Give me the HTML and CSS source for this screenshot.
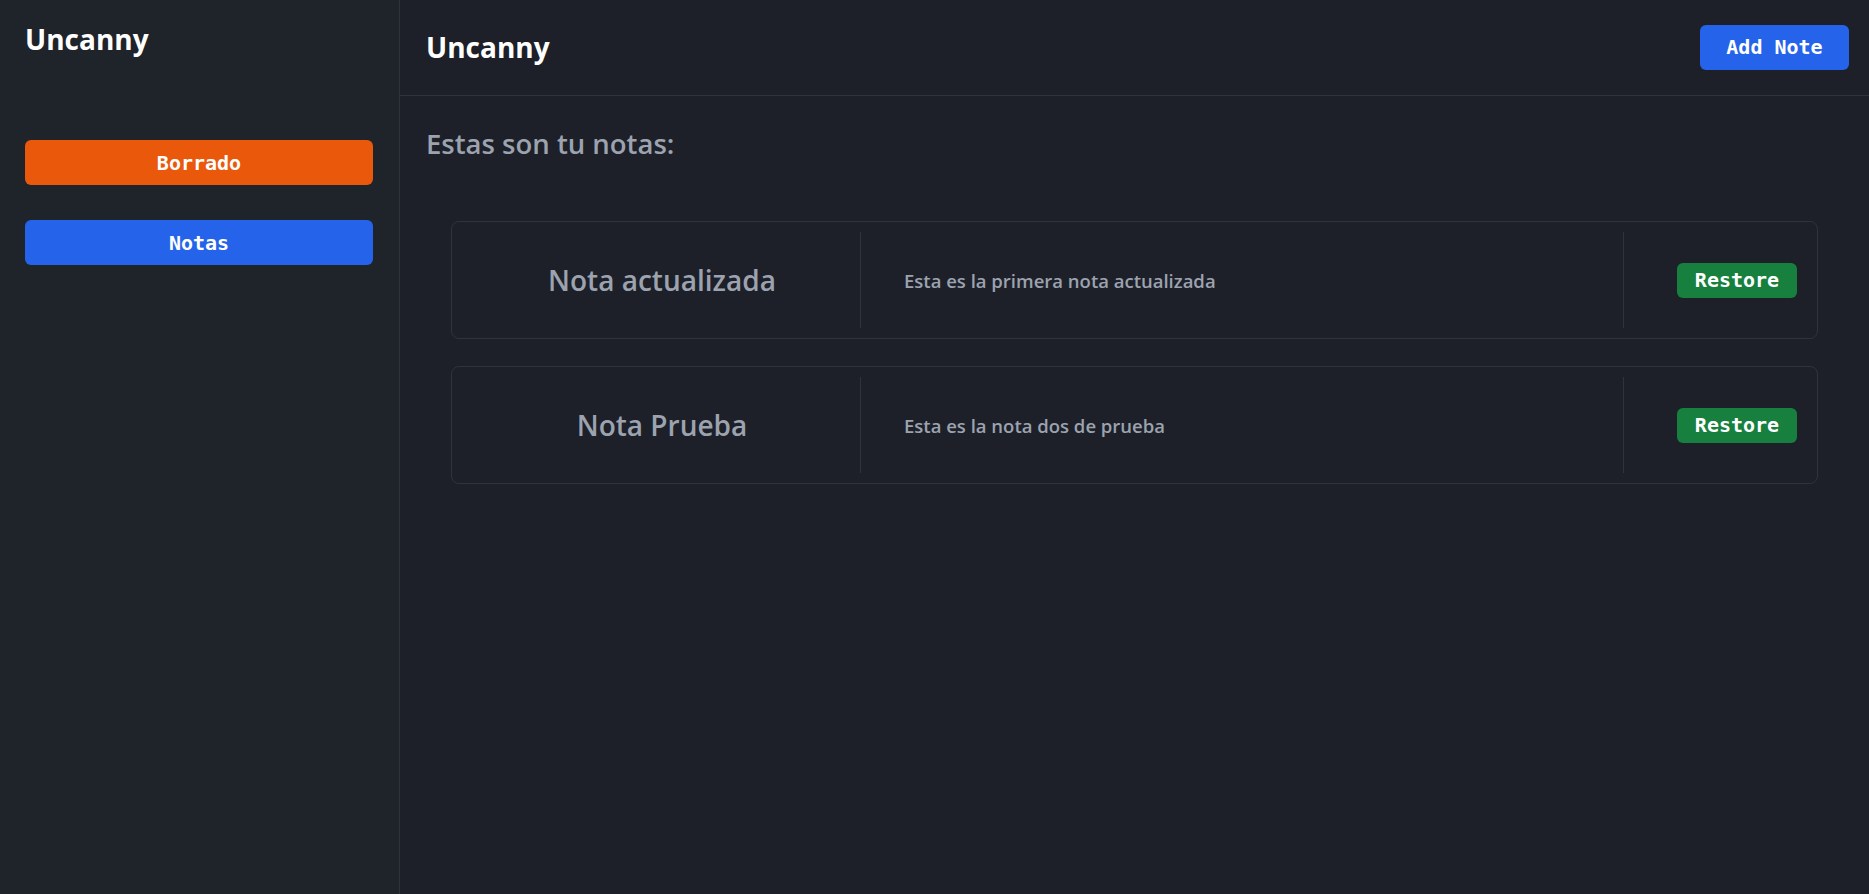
FILE: index.html
```html
<!DOCTYPE html>
<html lang="es">
<head>
<meta charset="utf-8">
<title>Uncanny</title>
<link rel="stylesheet" href="styles.css">
</head>
<body>
<div class="app">
  <aside class="sidebar">
    <h1 class="brand">Uncanny</h1>
    <nav class="nav">
      <button class="nav-btn nav-btn--orange">Borrado</button>
      <button class="nav-btn nav-btn--blue">Notas</button>
    </nav>
  </aside>
  <main class="main">
    <header class="topbar">
      <h1 class="brand">Uncanny</h1>
      <button class="add-btn">Add Note</button>
    </header>
    <section class="content">
      <h2 class="subtitle">Estas son tu notas:</h2>
      <div class="notes">
        <article class="note">
          <div class="note-title">Nota actualizada</div>
          <div class="note-desc">Esta es la primera nota actualizada</div>
          <div class="note-actions"><button class="restore-btn">Restore</button></div>
        </article>
        <article class="note">
          <div class="note-title">Nota Prueba</div>
          <div class="note-desc">Esta es la nota dos de prueba</div>
          <div class="note-actions"><button class="restore-btn">Restore</button></div>
        </article>
      </div>
    </section>
  </main>
</div>
</body>
</html>
```

FILE: styles.css
```css
* { box-sizing: border-box; }

html, body {
  margin: 0;
  height: 100%;
  background: #1d2029;
  font-family: "Open Sans", "Noto Sans", sans-serif;
}

.app {
  display: flex;
  height: 100vh;
}

.sidebar {
  width: 400px;
  flex-shrink: 0;
  background: #1f232a;
  border-right: 1px solid #2f323b;
  padding: 20px 26px 0 25px;
}

.brand {
  margin: 0;
  font-size: 28px;
  font-weight: 700;
  line-height: normal;
  color: #ffffff;
}

.nav {
  display: flex;
  flex-direction: column;
  gap: 35px;
  margin-top: 82px;
}

.nav-btn, .add-btn, .restore-btn {
  border: none;
  color: #ffffff;
  font-family: "DejaVu Sans Mono", "Liberation Mono", monospace;
  font-weight: 700;
  font-size: 20px;
  cursor: pointer;
}

.nav-btn {
  width: 348px;
  height: 45px;
  border-radius: 6px;
}

.nav-btn--orange { background: #ea580c; }
.nav-btn--blue { background: #2563eb; }

.main {
  flex: 1;
  display: flex;
  flex-direction: column;
  background: #1d2029;
}

.topbar {
  height: 96px;
  display: flex;
  align-items: center;
  justify-content: space-between;
  padding: 0 20px 1px 26px;
  border-bottom: 1px solid #30333c;
}

.add-btn {
  width: 149px;
  height: 45px;
  border-radius: 6px;
  background: #2563eb;
}

.content {
  padding: 29px 0 0 0;
}

.subtitle {
  margin: 0 0 0 26px;
  font-size: 27.5px;
  font-weight: 600;
  line-height: 38px;
  color: #9ca3af;
}

.notes {
  display: flex;
  flex-direction: column;
  gap: 27px;
  margin: 58px 51px 0 51px;
}

.note {
  display: flex;
  height: 118px;
  padding: 10px 0;
  border: 1px solid #30333d;
  border-radius: 8px;
}

.note-title {
  width: 409px;
  flex-shrink: 0;
  display: flex;
  align-items: center;
  justify-content: center;
  padding-left: 12px;
  font-size: 28px;
  font-weight: 600;
  color: #9ca3af;
  border-right: 1px solid #30333d;
}

.note-desc {
  flex: 1;
  display: flex;
  align-items: center;
  padding-left: 43px;
  font-size: 18.5px;
  font-weight: 600;
  color: #9ca3af;
  border-right: 1px solid #30333d;
}

.note-actions {
  width: 193px;
  flex-shrink: 0;
  display: flex;
  align-items: center;
  justify-content: flex-end;
  padding-right: 20px;
}

.restore-btn {
  width: 120px;
  height: 35px;
  border-radius: 6px;
  background: #17803e;
  padding: 0;
}
```
